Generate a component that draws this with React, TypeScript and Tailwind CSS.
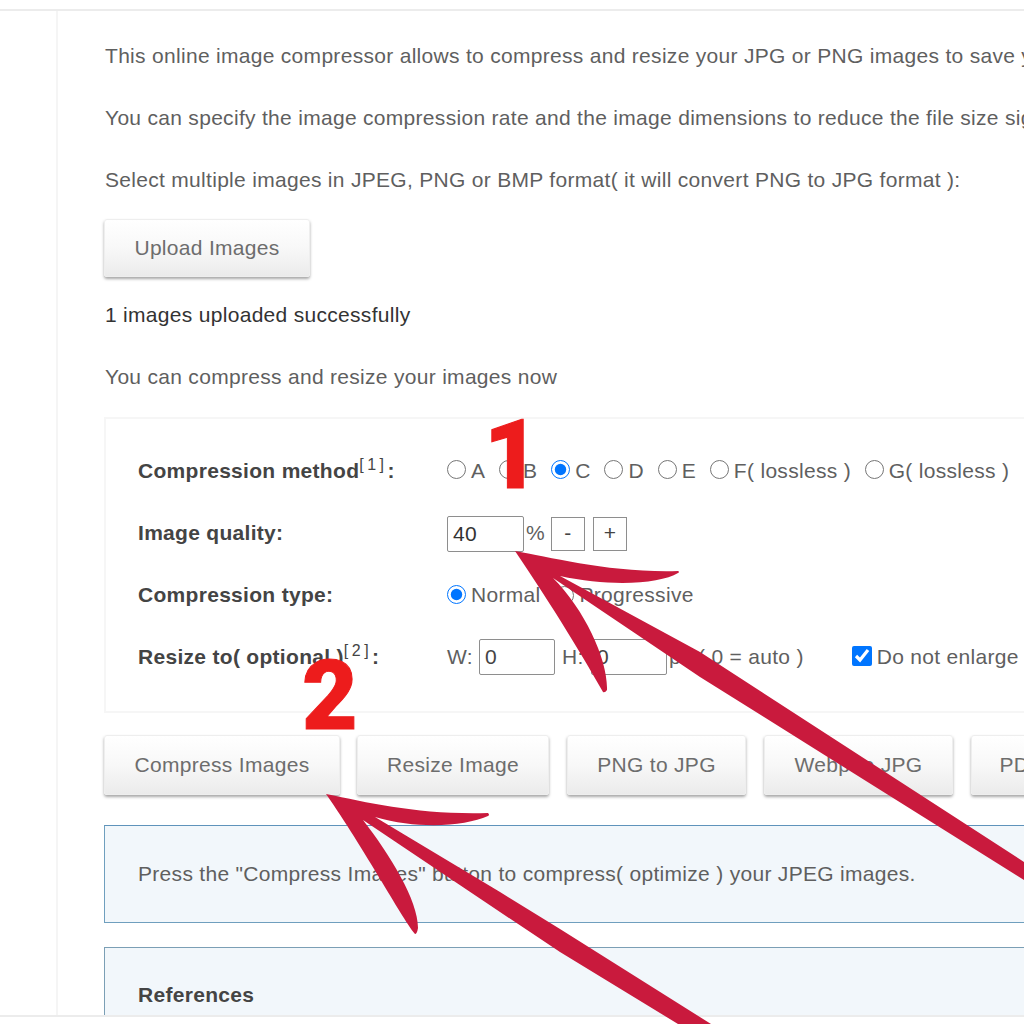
const Radio = ({ label, checked }: { label: string; checked?: boolean }) => (
  <label className="flex items-center mr-[13.8px]">
    <input type="radio" name="m" defaultChecked={checked} className="m-0 w-[19px] h-[19px] mr-[5px] -translate-y-[2px]" />
    <span>{label}</span>
  </label>
);

const ActionButton = ({ label, w }: { label: string; w: string }) => (
  <button
    className={`${w} shrink-0 rounded-[3px] border border-[#eeeeee] bg-gradient-to-b from-[#ffffff] via-[#f8f8f8] to-[#ebebeb] text-[#6d6d6d] text-[21px] tracking-[0.3px] shadow-[0_2px_3px_rgba(0,0,0,0.35)] text-center`}
  >
    {label}
  </button>
);

export default function App() {
  return (
    <div className="relative w-[1024px] h-[1024px] overflow-hidden bg-white font-['Liberation_Sans',Arial,sans-serif] text-[21px] tracking-[0.3px] text-[#5f5f5f]">
      <div className="h-[11px] border-b-2 border-[#ececec]" />
      <div className="flex h-[1006px] border-b-2 border-[#ececec]">
        <div className="w-[58px] shrink-0 border-r-2 border-[#f5f5f5]" />
        <main className="pl-[46px] w-[1100px] shrink-0 overflow-hidden">
          <p className="ml-px mt-[29px] h-[32px] leading-[32px] whitespace-nowrap">This online image compressor allows to compress and resize your JPG or PNG images to save your space.</p>
          <p className="ml-px mt-[30px] h-[32px] leading-[32px] whitespace-nowrap">You can specify the image compression rate and the image dimensions to reduce the file size significantly.</p>
          <p className="ml-px mt-[30px] h-[32px] leading-[32px] whitespace-nowrap">Select multiple images in JPEG, PNG or BMP format( it will convert PNG to JPG format ):</p>
          <ActionButton label="Upload Images" w="w-[206px] h-[58px] block mt-[23px]" />
          <p className="ml-px mt-[22px] h-[32px] leading-[32px] text-[#333333]">1 images uploaded successfully</p>
          <p className="ml-px mt-[30px] h-[32px] leading-[32px]">You can compress and resize your images now</p>

          <section className="mt-[24px] h-[296px] border-2 border-[#f6f6f6] pl-[32px] pt-[36px]">
            <div className="flex items-center h-[32px]">
              <b className="w-[309px] text-[#444444]">Compression method<sup className="font-normal text-[16px] tracking-[3.5px]">[1]</sup>:</b>
              <div className="flex items-center">
                <Radio label="A" />
                <Radio label="B" />
                <Radio label="C" checked />
                <Radio label="D" />
                <Radio label="E" />
                <Radio label="F( lossless )" />
                <Radio label="G( lossless )" />
              </div>
            </div>
            <div className="flex items-center h-[32px] mt-[30px]">
              <b className="w-[309px] text-[#444444]">Image quality:</b>
              <div className="w-[77px] h-[36px] translate-y-[1px] border border-[#8e8e8e] rounded-[2px] pl-[5px] leading-[34px] text-[#333333]">40</div>
              <span className="ml-[2px] w-[25px]">%</span>
              <div className="w-[34px] h-[34px] translate-y-[1px] border border-[#8e8e8e] text-center leading-[30px] text-[#444444]">-</div>
              <div className="w-[34px] h-[34px] translate-y-[1px] ml-[8px] border border-[#8e8e8e] text-center leading-[30px] text-[#444444]">+</div>
            </div>
            <div className="flex items-center h-[32px] mt-[30px]">
              <b className="w-[309px] text-[#444444]">Compression type:</b>
              <label className="flex items-center">
                <input type="radio" name="t" defaultChecked className="m-0 w-[19px] h-[19px] mr-[5px] -translate-y-[1px]" />
                <span>Normal</span>
              </label>
              <label className="flex items-center ml-[15px]">
                <input type="radio" name="t" className="m-0 w-[19px] h-[19px] mr-[5px]" />
                <span>Progressive</span>
              </label>
            </div>
            <div className="flex items-center h-[32px] mt-[30px]">
              <b className="w-[309px] text-[#444444]">Resize to( optional )<sup className="font-normal text-[16px] tracking-[3.5px]">[2]</sup>:</b>
              <span className="w-[32px]">W:</span>
              <div className="w-[76px] h-[36px] border border-[#8e8e8e] rounded-[2px] pl-[5px] leading-[34px] text-[#444444]">0</div>
              <span className="ml-[7px] w-[29px]">H:</span>
              <div className="w-[76px] h-[36px] border border-[#8e8e8e] rounded-[2px] pl-[5px] leading-[34px] text-[#444444]">0</div>
              <span className="ml-[2px] w-[29px]">px</span>
              <span>( 0 = auto )</span>
              <label className="flex items-center ml-[48px]">
                <input type="checkbox" defaultChecked className="m-0 w-[20px] h-[20px] mr-[5px] -translate-y-[1px]" />
                <span>Do not enlarge</span>
              </label>
            </div>
          </section>

          <div className="flex h-[60px] mt-[22px]">
            <ActionButton label="Compress Images" w="w-[236px]" />
            <ActionButton label="Resize Image" w="w-[192px] ml-[17px]" />
            <ActionButton label="PNG to JPG" w="w-[179px] ml-[18px]" />
            <ActionButton label="Webp to JPG" w="w-[189px] ml-[18px]" />
            <ActionButton label="PDF to JPG" w="w-[172px] ml-[18px]" />
          </div>

          <div className="mt-[30px] h-[98px] border border-[#6f9fbe] border-t-[#5f93bb] bg-[#f2f7fb] pl-[33px] leading-[96px]">
            Press the "Compress Images" button to compress( optimize ) your JPEG images.
          </div>
          <div className="mt-[24px] h-[200px] border border-[#7b9fb5] bg-[#f2f7fb] pl-[33px] pt-[31px]">
            <b className="text-[#444444]">References</b>
          </div>
        </main>
      </div>

      <div className="absolute left-[484px] top-[399px] text-[#ed1c1c] font-['Roboto',sans-serif] font-black tracking-normal text-[96px] leading-[112px] [-webkit-text-stroke:1px_#ed1c1c]">1</div>
      <div className="absolute left-[302px] top-[640px] text-[#ed1c1c] font-['Roboto',sans-serif] font-black tracking-normal text-[96px] leading-[112px] [-webkit-text-stroke:1px_#ed1c1c]">2</div>

      <svg className="absolute inset-0 pointer-events-none" width="1024" height="1024" viewBox="0 0 1024 1024" fill="#c91a3d">
        <path d="M515 551 C550 557 610 573 678 571 Q680 572 678 573 C660 584 610 587 560 576 L700 652 L1024 862 L1024 880 L700 677 L553 578 C585 610 608 660 607 690 Q605 693 603 692 C585 660 555 610 515 551 Z" />
        <path d="M326 794 C370 803 420 815 488 813 Q490 815 488 816 C465 826 420 830 375 817 L500 892 L560 929 L711 1024 L678 1024 L560 952 L500 912 L363 820 C390 855 418 900 418 928 Q417 934 415 934 C400 915 365 850 326 794 Z" />
      </svg>
    </div>
  );
}
